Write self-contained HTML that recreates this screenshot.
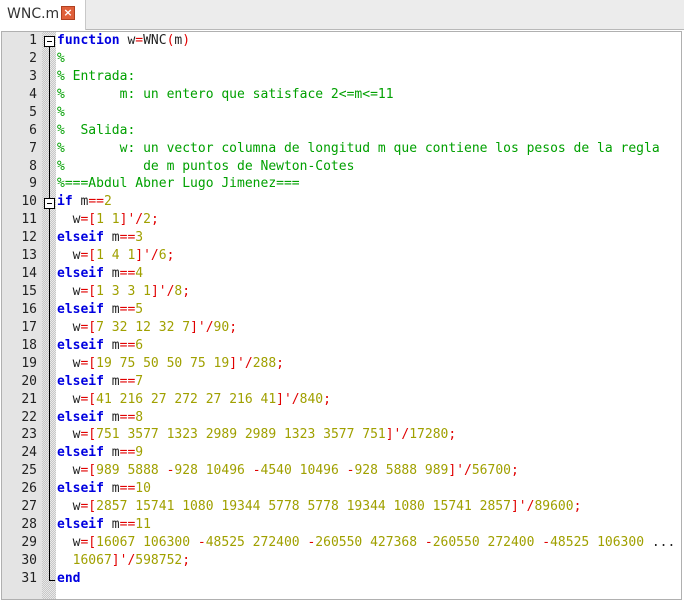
<!DOCTYPE html>
<html><head><style>
body{margin:0;width:684px;height:601px;background:#fff;overflow:hidden;font-family:"DejaVu Sans Mono",monospace;position:relative}
#tabbar{position:absolute;left:0;top:0;width:684px;height:29px;background:#ececec;border-bottom:1px solid #b8b8b8}
#tab{position:absolute;left:0;top:0;width:85px;height:30px;background:#fff;border-right:1px solid #c8c8c8}
#tab span{position:absolute;left:7px;top:6px;font:14px "DejaVu Sans",sans-serif;color:#333}
#x{position:absolute;left:61px;top:6px;width:12px;height:12px;background:#e0603a;border:1px solid #b04020;color:#fff;font:bold 11px "DejaVu Sans",sans-serif;line-height:12px;text-align:center}
#ed{position:absolute;left:1px;top:31px;width:679px;height:567px;border:1px solid #b0b0b0;background:#fff}
#gut{position:absolute;left:0;top:0;width:40px;height:567px;background:#e4e4e4}
#fold{position:absolute;left:40px;top:0;width:14px;height:567px;background-image:repeating-conic-gradient(#c8c8c8 0 25%,#e8e8e8 0 50%);background-size:2px 2px}
.ln{position:absolute;right:644px;font-size:13px;color:#222;text-align:right;width:36px}
.cl{position:absolute;left:55px;font-size:13px;white-space:pre;color:#222}
.k{color:#0000e0;font-weight:bold}.c{color:#00a000}.o{color:#e00000}.n{color:#a0a000}
.box{position:absolute;left:42px;width:9px;height:9px;border:1px solid #000;background:#fff}
.box:after{content:"";position:absolute;left:2px;top:4px;width:5px;height:1px;background:#000}
</style></head><body>
<div id="tabbar"></div>
<div id="tab"><span>WNC.m</span><div id="x">×</div></div>
<div id="ed">
<div id="gut"></div><div id="fold"></div>
<div style="position:absolute;left:47px;top:12px;width:1px;height:537px;background:#000"></div>
<div style="position:absolute;left:47px;top:548px;width:6px;height:1px;background:#000"></div>
<div class="box" style="top:4px"></div>
<div class="box" style="top:166px"></div>
<div id="lines"></div>
</div>
<script>
var L=[
'<span class="k">function</span> w<span class="o">=</span>WNC<span class="o">(</span>m<span class="o">)</span>',
'<span class="c">%</span>',
'<span class="c">% Entrada:</span>',
'<span class="c">%       m: un entero que satisface 2&lt;=m&lt;=11</span>',
'<span class="c">%</span>',
'<span class="c">%  Salida:</span>',
'<span class="c">%       w: un vector columna de longitud m que contiene los pesos de la regla</span>',
'<span class="c">%          de m puntos de Newton-Cotes</span>',
'<span class="c">%===Abdul Abner Lugo Jimenez===</span>',
'<span class="k">if</span> m<span class="o">==</span><span class="n">2</span>'];
function w(a,d){return '  w<span class="o">=[</span><span class="n">'+a.replace(/ -/g,' </span><span class="o">-</span><span class="n">')+'</span><span class="o">]\'/</span><span class="n">'+d+'</span><span class="o">;</span>';}
function e(n){return '<span class="k">elseif</span> m<span class="o">==</span><span class="n">'+n+'</span>';}
L.push(w('1 1',2),e(3),w('1 4 1',6),e(4),w('1 3 3 1',8),e(5),w('7 32 12 32 7',90),e(6),w('19 75 50 50 75 19',288),e(7),w('41 216 27 272 27 216 41',840),e(8),w('751 3577 1323 2989 2989 1323 3577 751',17280),e(9),w('989 5888 -928 10496 -4540 10496 -928 5888 989',56700),e(10),w('2857 15741 1080 19344 5778 5778 19344 1080 15741 2857',89600),e(11));
L.push('  w<span class="o">=[</span><span class="n">16067 106300 </span><span class="o">-</span><span class="n">48525 272400 </span><span class="o">-</span><span class="n">260550 427368 </span><span class="o">-</span><span class="n">260550 272400 </span><span class="o">-</span><span class="n">48525 106300 </span>...');
L.push('  <span class="n">16067</span><span class="o">]\'/</span><span class="n">598752</span><span class="o">;</span>');
L.push('<span class="k">end</span>');
var h='';for(var i=0;i<L.length;i++){var t=i*17.93+1;h+='<div class="ln" style="top:'+t+'px">'+(i+1)+'</div><div class="cl" style="top:'+t+'px">'+L[i]+'</div>';}
document.getElementById('lines').innerHTML=h;
</script>
</body></html>
